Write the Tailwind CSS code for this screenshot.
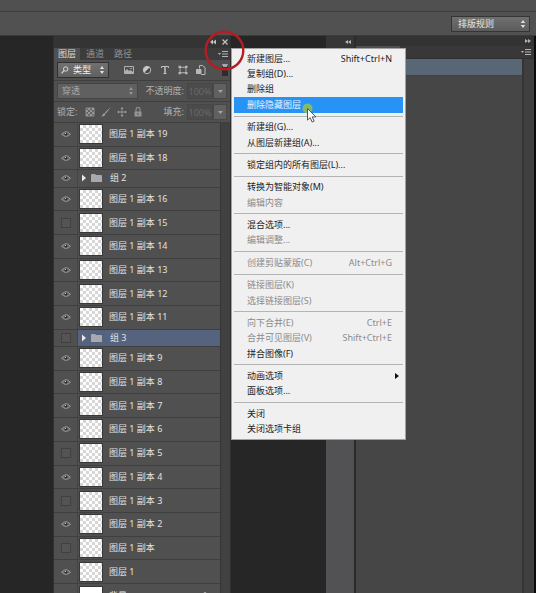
<!DOCTYPE html>
<html lang="zh-CN">
  <head>
    <meta charset="utf-8" />
    <meta content="width=device-width, initial-scale=1.0" name="viewport" />
    <title>图层</title>
    <script src="https://cdn.jsdelivr.net/npm/@tailwindcss/browser@4"></script>
  </head>
  <body
    class="flex h-screen flex-col overflow-hidden bg-[#262627] font-['Noto_Sans','Noto_Sans_CJK_SC',sans-serif] text-[9px] leading-3 text-[#cfcfcf]"
  >
    <!-- Application bars -->
    <div class="h-3 shrink-0 border-b border-[#3d3d3d] bg-[#505050]"></div>
    <header
      class="flex h-6 shrink-0 items-center justify-end border-b border-[#3a3a3a] bg-[#515151] pr-1.5"
    >
      <div class="relative">
        <select
          aria-label="工作区"
          class="block h-4 w-[79px] appearance-none border border-[#353535] bg-linear-to-b from-[#707070] to-[#5c5c5c] pl-1.5 text-[#e4e4e4]"
        >
          <option>排版规则</option>
        </select>
        <svg class="pointer-events-none absolute top-1 right-1 h-2 w-1.5" viewBox="0 0 6 8" fill="#dedede">
          <path d="M3 0 5.2 3H.8zM3 8 .8 5h4.4z" />
        </svg>
      </div>
    </header>

    <main class="relative flex min-h-0 flex-1">
      <div class="w-[53px] shrink-0"></div>

      <!-- Layers panel -->
      <section class="flex w-[178px] shrink-0 flex-col border-x border-[#303030] bg-[#505050]">
        <div class="flex h-3 shrink-0 items-center justify-end gap-1.5 bg-[#343434] pr-0.5">
          <button aria-label="折叠">
            <svg class="h-1.5 w-1.5" viewBox="0 0 6 6" fill="#c4c4c4"><path d="M3 .5v5L0 3zM6 .5v5L3 3z" /></svg>
          </button>
          <button aria-label="关闭面板">
            <svg class="h-1.5 w-1.5" viewBox="0 0 6 6" stroke="#c4c4c4" stroke-width="1.2"><path d="m.5.5 5 5m0-5-5 5" /></svg>
          </button>
        </div>
        <div class="flex h-3 shrink-0 items-stretch bg-[#3c3c3c] text-[#929292]">
          <button class="w-[26px] bg-[#505050] text-[#dddddd]">图层</button>
          <button class="ml-0.5 w-[26px]">通道</button>
          <button class="ml-0.5 w-[26px]">路径</button>
          <button class="mr-0.5 ml-auto" aria-label="面板菜单">
            <svg class="h-1.5 w-2.5" viewBox="0 0 10 6" fill="#b4b4b4"><path d="M0 2h3L1.5 4zM4 0h6v1H4zM4 2.5h6v1H4zM4 5h6v1H4z" /></svg>
          </button>
        </div>

        <!-- Filter row -->
        <div class="flex h-[21px] shrink-0 items-center border-b border-[#3f3f3f] pr-0.5 pl-[3px]">
          <div class="relative">
            <svg class="pointer-events-none absolute top-1 left-1 h-2 w-2" viewBox="0 0 8 8" fill="none" stroke="#d6d6d6">
              <circle cx="4.7" cy="3" r="2.2" /><path d="M3 4.6.6 7.4" stroke-width="1.3" />
            </svg>
            <select
              aria-label="滤镜类型"
              class="block h-4 w-[52px] appearance-none border border-[#303030] bg-linear-to-b from-[#717171] to-[#606060] pl-[15px] text-[#f2f2f2]"
            >
              <option>类型</option>
            </select>
            <svg class="pointer-events-none absolute top-1 right-1 h-2 w-1.5" viewBox="0 0 6 8" fill="#e4e4e4">
              <path d="M3 0 5 3H1zM3 8 1 5h4z" />
            </svg>
          </div>
          <div class="ml-[15px] flex gap-2">
            <button aria-label="像素图层">
              <svg class="h-2.5 w-2.5" viewBox="0 0 10 10" fill="none" stroke="#b0b0b0"><path d="M.5 1.5h9v7h-9z" /><path d="M1 8V6l2-2 2 2 1.5-1L9 7v1z" fill="#b0b0b0" stroke="none" /><circle cx="7" cy="3.5" r=".8" fill="#b0b0b0" stroke="none" /></svg>
            </button>
            <button aria-label="调整图层">
              <svg class="h-2.5 w-2.5" viewBox="0 0 10 10"><circle cx="5" cy="5" r="3.7" fill="#474747" stroke="#b8b8b8" /><path d="M2.2 7.8A4 4 0 0 1 7.8 2.2z" fill="#c8c8c8" /></svg>
            </button>
            <button aria-label="文字图层">
              <svg class="h-2.5 w-2.5" viewBox="0 0 10 10" fill="none" stroke="#c0c0c0"><path d="M1.5 3V1.5h7V3M3.5 8.5h3" /><path d="M5 1.5v7" stroke-width="1.5" /></svg>
            </button>
            <button aria-label="形状图层">
              <svg class="h-2.5 w-2.5" viewBox="0 0 10 10" fill="#b8b8b8"><path d="M2 1.8h6v.9H2zM2 7.3h6v.9H2zM1.6 2h.9v6h-.9zM7.5 2h.9v6h-.9zM.5.7h2.4v2.4H.5zM7.1.7h2.4v2.4H7.1zM.5 6.9h2.4v2.4H.5zM7.1 6.9h2.4v2.4H7.1z" /></svg>
            </button>
            <button aria-label="智能对象">
              <svg class="h-2.5 w-2.5" viewBox="0 0 10 10" fill="none" stroke="#b8b8b8"><path d="M3.5 3.5v-3h3l2.5 2v7H5" /><path d="M.5 4.5h4.5v4H.5z" fill="#b8b8b8" /></svg>
            </button>
          </div>
          <button aria-label="打开滤镜" class="ml-auto h-3 w-1.5 border border-[#2c2c2c] border-t-[3px] border-t-[#a9a9a9] bg-[#2d2d2d]"></button>
        </div>

        <!-- Blend mode row -->
        <div class="flex h-[21px] shrink-0 items-center border-b border-[#3f3f3f] pr-[3px] pl-[3px]">
          <div class="relative">
            <select
              aria-label="混合模式"
              class="block h-4 w-[81px] appearance-none border border-[#454545] bg-[#606060] pl-1 text-[#aaaaaa]"
            >
              <option>穿透</option>
            </select>
            <svg class="pointer-events-none absolute top-1 right-1 h-2 w-1.5" viewBox="0 0 6 8" fill="#949494">
              <path d="M3 0 5 3H1zM3 8 1 5h4z" />
            </svg>
          </div>
          <label for="opacity" class="ml-auto text-[#b0b0b0]">不透明度:</label>
          <input id="opacity" value="100%" class="ml-[3px] h-4 w-[26px] border border-[#474747] bg-[#4b4b4b] text-center text-[#696969]" />
          <button aria-label="调整不透明度" class="flex h-4 w-3.5 items-center justify-center border border-[#474747] bg-[#606060]">
            <svg class="h-[3px] w-[5px]" viewBox="0 0 5 3" fill="#a4a4a4"><path d="M0 0h5L2.5 3z" /></svg>
          </button>
        </div>

        <!-- Lock row -->
        <div class="flex h-[21px] shrink-0 items-center border-b border-[#3f3f3f] pr-[3px] pl-[3px]">
          <span class="text-[#b0b0b0]">锁定:</span>
          <div class="ml-2 flex gap-1.5">
            <button aria-label="锁定透明像素">
              <svg class="h-2.5 w-2.5" viewBox="0 0 10 10"><path d="M1 1h8v8H1z" fill="#626262" stroke="#8d8d8d" /><path d="M3 1h2v2H3zM7 1h2v2H7zM1 3h2v2H1zM5 3h2v2H5zM3 5h2v2H3zM7 5h2v2H7zM1 7h2v2H1zM5 7h2v2H5z" fill="#979797" /></svg>
            </button>
            <button aria-label="锁定图像像素">
              <svg class="h-2.5 w-2.5" viewBox="0 0 10 10" fill="#9c9c9c"><path d="M9.8 0 5 6.4 3.8 5.4zM3.3 5.9l1.2 1C4.2 8.6 2.2 9.8 0 9.3c1.6-.6 1.6-2.8 3.3-3.4z" /></svg>
            </button>
            <button aria-label="锁定位置">
              <svg class="h-2.5 w-2.5" viewBox="0 0 10 10" fill="#9c9c9c"><path d="M4.6 1h.8v8h-.8zM1 4.6h8v.8H1zM5 0l1.6 2H3.4zM5 10 3.4 8h3.2zM0 5l2-1.6v3.2zM10 5 8 6.6V3.4z" /></svg>
            </button>
            <button aria-label="锁定全部">
              <svg class="h-2.5 w-2.5" viewBox="0 0 10 10"><path d="M3 5V2.5a2 2 0 0 1 4 0V5" fill="none" stroke="#949494" stroke-width="1.1" /><path d="M1.5 4.5h7v5h-7z" fill="#949494" /><path d="M4.5 6h1v2h-1z" fill="#555555" /></svg>
            </button>
          </div>
          <label for="fill" class="ml-auto text-[#b0b0b0]">填充:</label>
          <input id="fill" value="100%" class="ml-[3px] h-4 w-[26px] border border-[#474747] bg-[#4b4b4b] text-center text-[#696969]" />
          <button aria-label="调整填充" class="flex h-4 w-3.5 items-center justify-center border border-[#474747] bg-[#606060]">
            <svg class="h-[3px] w-[5px]" viewBox="0 0 5 3" fill="#a4a4a4"><path d="M0 0h5L2.5 3z" /></svg>
          </button>
        </div>

        <div class="flex min-h-0 flex-1">
          <!-- the last row runs on below the window -->
          <ul id="layers" class="-mb-4 flex min-w-0 flex-1 flex-col"></ul>
          <div class="w-2.5 shrink-0 border-l border-[#363636] bg-[#414141]"></div>
        </div>
      </section>

      <!-- Canvas -->
      <div class="w-[95px] shrink-0"></div>

      <!-- Collapsed dock -->
      <aside class="flex w-[30px] shrink-0 flex-col border-r-2 border-[#2b2b2b] bg-[#525254]">
        <div class="flex h-3 items-center justify-end bg-[#363636] pr-[3px]">
          <button aria-label="展开面板">
            <svg class="h-1.5 w-1.5" viewBox="0 0 6 6" fill="#b4b4b4"><path d="M3 1v4L0 3zM6 1v4L3 3z" /></svg>
          </button>
        </div>
      </aside>

      <!-- Right dock -->
      <aside class="flex min-w-0 flex-1 flex-col border-r-2 border-[#0c0c0c] bg-[#464647]">
        <div class="flex h-2.5 shrink-0 items-center justify-end bg-[#333333] pr-[3px]">
          <button aria-label="折叠面板">
            <svg class="h-1.5 w-1.5" viewBox="0 0 6 6" fill="#b4b4b4"><path d="M0 1v4l3-2zM3 1v4l3-2z" /></svg>
          </button>
        </div>
        <div class="flex h-[13px] shrink-0 items-center justify-between border-b border-[#303030] bg-[#383838] pr-[3px]">
          <div class="h-full w-11 bg-[#505050]"></div>
          <button aria-label="面板菜单">
            <svg class="h-1.5 w-2.5" viewBox="0 0 10 6" fill="#b4b4b4"><path d="M0 2h3L1.5 4zM4 0h6v1H4zM4 2.5h6v1H4zM4 5h6v1H4z" /></svg>
          </button>
        </div>
        <div class="flex flex-1">
          <div class="flex-1">
            <div class="h-[17px] border-b border-[#3b424a] bg-[#596675]"></div>
          </div>
          <div class="w-3 border-l-2 border-[#343434] bg-[#3f3f40]"></div>
        </div>
      </aside>

      <!-- Panel menu -->
      <div
        id="panel-menu"
        role="menu"
        class="absolute top-3 left-[231px] flex h-[392px] w-[175px] flex-col border border-[#a2a2a2] bg-[#f0f0f1] p-0.5 text-[#1c1c1c]"
      ></div>

      <!-- Pointer and marker over the panels -->
      <svg class="pointer-events-none absolute -top-[6px] left-[204px] h-[41px] w-[41px]" viewBox="0 0 41 41" fill="none" stroke="#b51d25" stroke-width="2.4">
        <circle cx="20.5" cy="20.5" r="18.8" />
      </svg>
      <svg class="pointer-events-none absolute top-[67px] left-[302px] h-5 w-4" viewBox="0 0 16 20">
        <circle cx="5.5" cy="5.5" r="5" fill="#8fc05a" fill-opacity=".9" />
        <path d="M5.5 5.5v11.6l2.7-2.5 1.9 4.4 2-.9-1.9-4.2h3.7z" fill="#ffffff" stroke="#444444" stroke-width=".9" />
      </svg>
    </main>

    <script>
      const layers = [
        { name: "图层 1 副本 19", visible: true },
        { name: "图层 1 副本 18", visible: true },
        { name: "组 2", visible: true, group: true },
        { name: "图层 1 副本 16", visible: true },
        { name: "图层 1 副本 15", visible: false },
        { name: "图层 1 副本 14", visible: true },
        { name: "图层 1 副本 13", visible: true },
        { name: "图层 1 副本 12", visible: true },
        { name: "图层 1 副本 11", visible: true },
        { name: "组 3", visible: false, group: true, selected: true },
        { name: "图层 1 副本 9", visible: true },
        { name: "图层 1 副本 8", visible: true },
        { name: "图层 1 副本 7", visible: true },
        { name: "图层 1 副本 6", visible: true },
        { name: "图层 1 副本 5", visible: false },
        { name: "图层 1 副本 4", visible: true },
        { name: "图层 1 副本 3", visible: false },
        { name: "图层 1 副本 2", visible: true },
        { name: "图层 1 副本", visible: false },
        { name: "图层 1", visible: true },
        { name: "背景", visible: true, background: true },
      ];

      const eye = `<svg class="h-1.5 w-2.5" viewBox="0 0 10 6"><path d="M.5 3.2Q5-1.8 9.5 3.2 5 7.6.5 3.2z" fill="#6f6f6f" stroke="#9a9a9a" stroke-width=".9" /><circle cx="5" cy="3" r="1.6" fill="#2d2d2d" /><circle cx="4.5" cy="2.4" r=".6" fill="#c4c4c4" /></svg>`;
      const noEye = `<span class="h-2.5 w-2.5 border border-[#404040] bg-[#545454]"></span>`;
      const folder = `<svg class="ml-1 h-2 w-1" viewBox="0 0 4 8" fill="#e8e8e8"><path d="M0 .5 4 4 0 7.5z" /></svg>
        <svg class="ml-[5px] h-2 w-[11px]" viewBox="0 0 11 8" fill="#a6aab0"><path d="M0 1q0-1 1-1h3l1 1h5q1 0 1 1v6H0z" /></svg>`;
      const thumb = `<span class="ml-px h-5 w-6 shrink-0 border border-[#383838] bg-[#fbfbfb] bg-[repeating-conic-gradient(#d6d6d6_0_25%,#fdfdfd_0_50%)] bg-size-[6px_6px]"></span>`;
      const whiteThumb = `<span class="ml-px h-5 w-6 shrink-0 border border-[#383838] bg-white"></span>`;
      const lock = `<svg class="mr-3 ml-auto h-2 w-1.5" viewBox="0 0 6 8" fill="none" stroke="#b0b0b0"><path d="M1.5 4V2a1.5 1.5 0 0 1 3 0v2M1 4.5h4v3H1z" /></svg>`;

      document.getElementById("layers").innerHTML = layers
        .map((layer) => {
          let size = "grow-[24] basis-0";
          if (layer.group) size = "grow-[17] basis-0";
          if (layer.background) size = "h-[25px] shrink-0";
          const color = layer.selected ? "bg-[#55637e]" : "bg-[#505050]";
          const picture = layer.group
            ? folder
            : layer.background
            ? whiteThumb
            : thumb;
          return `<li class="flex min-h-0 items-center border-b border-[#3f3f3f] ${size} ${color}">
            <button aria-label="显示或隐藏" class="flex w-6 shrink-0 items-center justify-center self-stretch border-r border-[#454545] bg-[#505050]">${
              layer.visible ? eye : noEye
            }</button>
            ${picture}
            <span class="${layer.group ? "ml-2" : "ml-1.5"} whitespace-nowrap text-[#e2e2e2]">${layer.name}</span>
            ${layer.background ? lock : ""}
          </li>`;
        })
        .join("");

      const menu = [
        [
          { text: "新建图层...", keys: "Shift+Ctrl+N" },
          { text: "复制组(D)..." },
          { text: "删除组" },
          { text: "删除隐藏图层", active: true },
        ],
        [{ text: "新建组(G)..." }, { text: "从图层新建组(A)..." }],
        [{ text: "锁定组内的所有图层(L)..." }],
        [{ text: "转换为智能对象(M)" }, { text: "编辑内容", off: true }],
        [{ text: "混合选项..." }, { text: "编辑调整...", off: true }],
        [{ text: "创建剪贴蒙版(C)", keys: "Alt+Ctrl+G", off: true }],
        [
          { text: "链接图层(K)", off: true },
          { text: "选择链接图层(S)", off: true },
        ],
        [
          { text: "向下合并(E)", keys: "Ctrl+E", off: true },
          { text: "合并可见图层(V)", keys: "Shift+Ctrl+E", off: true },
          { text: "拼合图像(F)" },
        ],
        [{ text: "动画选项", sub: true }, { text: "面板选项..." }],
        [{ text: "关闭" }, { text: "关闭选项卡组" }],
      ];

      const arrow = `<svg class="absolute right-1 h-1.5 w-1" viewBox="0 0 4 6" fill="#111111"><path d="M0 0 4 3 0 6z" /></svg>`;

      document.getElementById("panel-menu").innerHTML = menu
        .map((group) =>
          group
            .map((item) => {
              let color = "";
              if (item.active) color = "bg-[#2693f5] text-[#e6f3ff]";
              if (item.off) color = "text-[#8b8b8b]";
              return `<button role="menuitem" ${
                item.off ? "disabled" : ""
              } class="relative flex min-h-0 flex-1 items-center justify-between pr-[11px] pl-[13px] ${color}">
                <span>${item.text}</span>
                ${item.keys ? `<span>${item.keys}</span>` : ""}
                ${item.sub ? arrow : ""}
              </button>`;
            })
            .join("")
        )
        .join(`<div class="my-[3px] h-px shrink-0 bg-[#b4b4b4]"></div>`);
    </script>
  </body>
</html>
